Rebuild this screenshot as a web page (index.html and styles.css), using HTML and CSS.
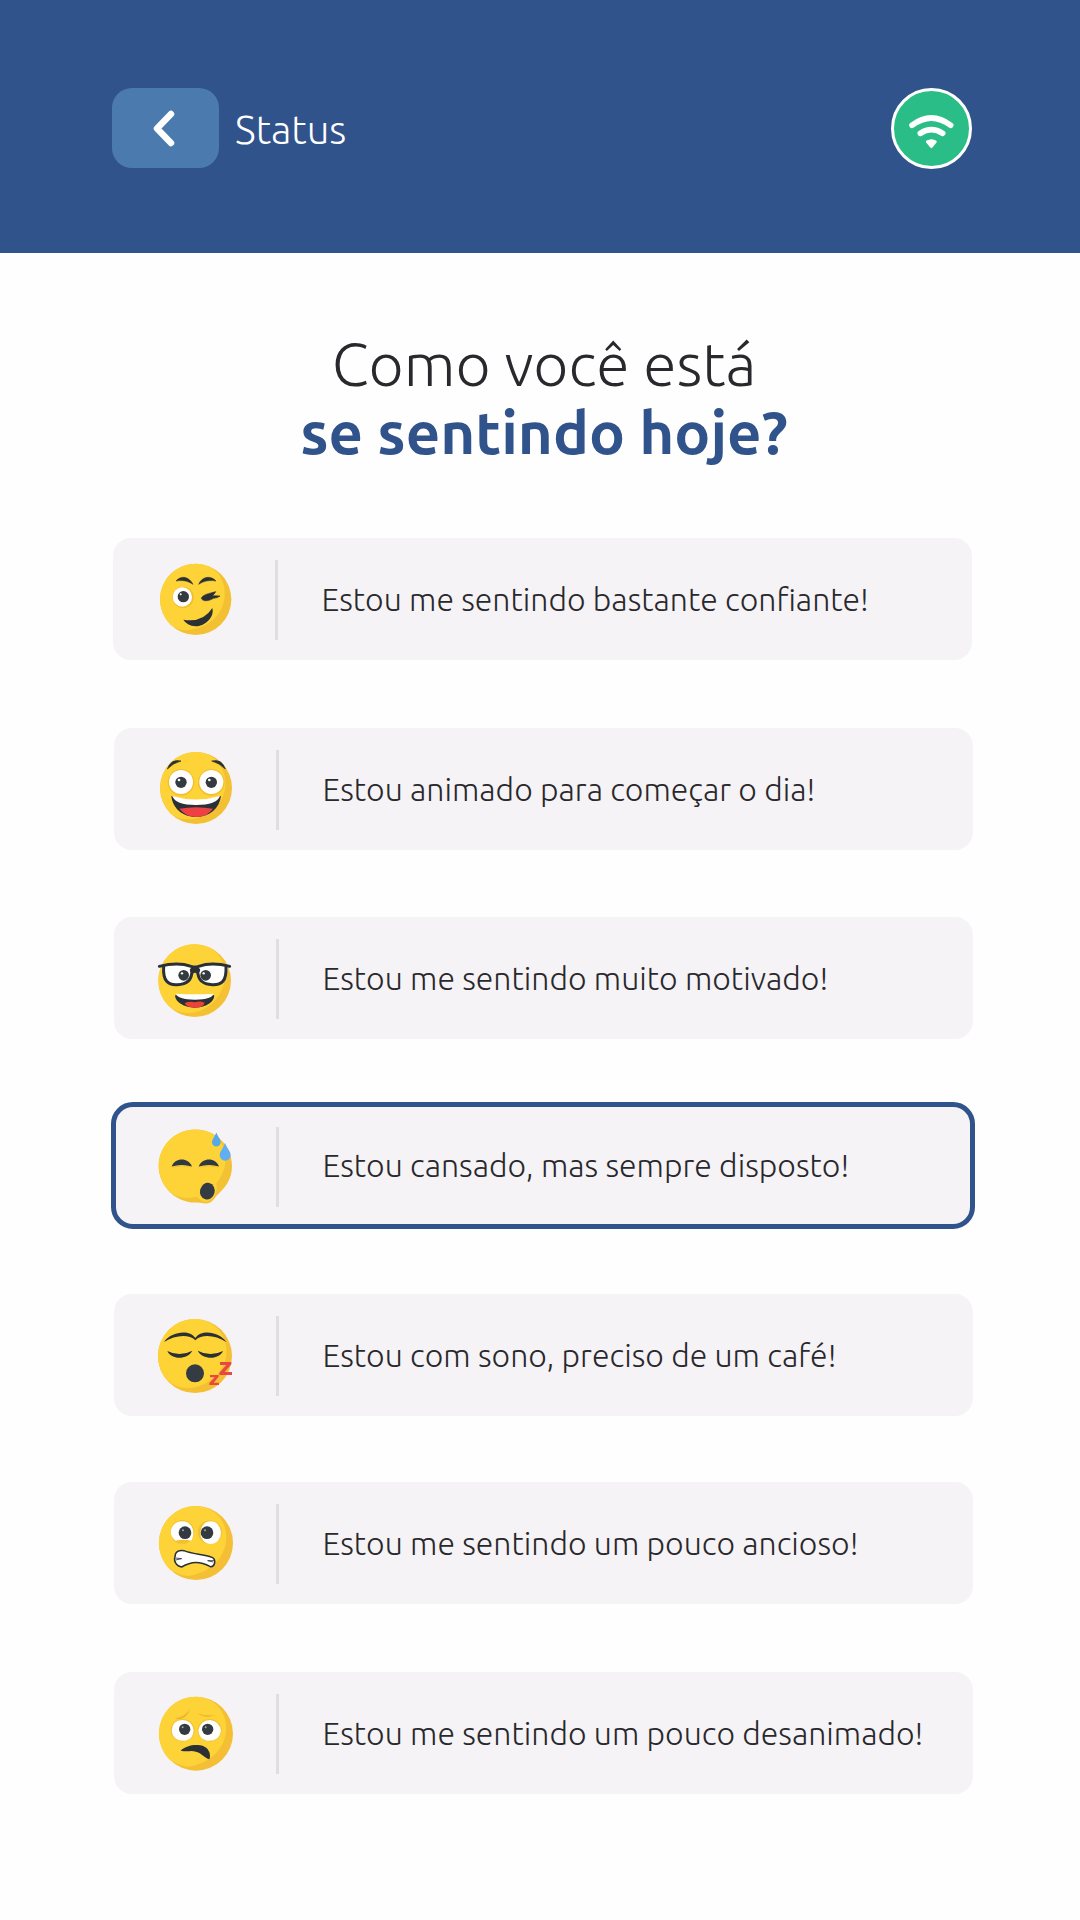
FILE: index.html
```html
<!DOCTYPE html>
<html lang="pt-BR">
<head>
    <meta charset="UTF-8">
    <meta name="viewport" content="width=device-width, initial-scale=1.0">
    <title>Status</title>
    <link rel="stylesheet" href="styles.css">
</head>
<body>
    <header class="header">
        <button class="back" aria-label="Voltar">
            <svg width="24" height="38" viewBox="0 0 24 38">
                <path d="M19 4 L5 18.500 L19 33" fill="none" stroke="#fff" stroke-width="6.500" stroke-linecap="round" stroke-linejoin="round"/>
            </svg>
        </button>
        <span class="header-title">Status</span>
        <div class="wifi">
            <svg width="75" height="75" viewBox="73 63 225 225">
                <g fill="none" stroke="#fff" stroke-width="17" stroke-linecap="round">
                    <path d="M127 166 Q185 122 243 166"/>
                    <path d="M152 190 Q185 168 219 190"/>
                </g>
                <path d="M169 217 Q167 211 176 210 Q185 206 195 210 Q203 212 201 217 L189 232 Q185 237 181 232 Z" fill="#fff"/>
            </svg>
        </div>
    </header>

    <main class="content">
        <h1 class="title">
            <span class="title-light">Como você está</span>
            <span class="title-bold">se sentindo hoje?</span>
        </h1>

        <ul class="moods">
            <li class="mood first">
                <svg class="emoji" viewBox="162 102 240 240">
                    <circle cx="287" cy="223" r="107" fill="#f3c034"/>
                    <path d="M287 116 C350 118 378 165 374 215 C369 270 325 309 265 315 Q235 318 212 299 A107 107 0 0 1 287 116" fill="#fdd337"/>
                    <path d="M228 168 C242 151 266 153 279 178 C262 167 246 165 228 168 M296 178 C306 153 334 151 348 168 C330 165 313 167 296 178" fill="#2b3035" stroke="#2b3035" stroke-width="1.500"/>
                    <circle cx="249" cy="217" r="32" fill="#f1bd2d"/>
                    <circle cx="247" cy="216" r="29" fill="#fff"/>
                    <circle cx="250" cy="215" r="17" fill="#343b40"/>
                    <circle cx="242" cy="208" r="3" fill="#fff"/>
                    <path d="M304 220 C307 209 329 205 347 200 Q343 208 337 212 L360 213 Q353 219 340 220 C326 229 308 230 304 220" fill="#2b3035" stroke="#2b3035" stroke-width="2"/>
                    <path d="M250 284 Q309 294 337 249 C345 280 309 305 287 304 Q260 301 250 284" fill="#2b3035"/>
                </svg>
                <span class="divider"></span>
                <span class="label">Estou me sentindo bastante confiante!</span>
            </li>
            <li class="mood">
                <svg class="emoji" viewBox="165 102 240 240">
                    <circle cx="288" cy="219" r="108" fill="#f3c034"/>
                    <path d="M288 111 C348 113 378 160 376 213 C371 270 326 306 277 312 Q238 316 213 296 A108 108 0 0 1 288 111" fill="#fdd337"/>
                    <path d="M202 162 Q213 131 243 138 Q221 143 202 162 M335 138 Q366 131 376 162 Q356 143 335 138" fill="#2b3035" stroke="#2b3035" stroke-width="2"/>
                    <circle cx="243" cy="202" r="40" fill="#f2bf2f"/>
                    <circle cx="334" cy="202" r="40" fill="#f2bf2f"/>
                    <circle cx="243" cy="201" r="36" fill="#fff"/>
                    <circle cx="334" cy="201" r="36" fill="#fff"/>
                    <circle cx="243" cy="202" r="17" fill="#343b40"/>
                    <circle cx="334" cy="202" r="17" fill="#343b40"/>
                    <circle cx="237" cy="195" r="4" fill="#fff"/>
                    <circle cx="328" cy="195" r="4" fill="#fff"/>
                    <path d="M214 243 Q288 268 363 243 C358 280 330 305 289 306 C247 306 218 280 214 243" fill="#2b3035"/>
                    <path d="M217 243 Q288 264 360 243 Q350 270 288 270 Q226 270 217 243" fill="#fff"/>
                    <path d="M238 281 Q288 272 339 281 Q321 306 289 306 Q257 305 238 281" fill="#ee4145"/>
                </svg>
                <span class="divider"></span>
                <span class="label">Estou animado para começar o dia!</span>
            </li>
            <li class="mood third">
                <svg class="emoji" viewBox="165 99 240 240">
                    <circle cx="284" cy="227" r="109" fill="#f4c134"/>
                    <path d="M284 118 C350 120 379 170 375 217 C370 275 327 319 270 324 Q232 326 204 301 A109 109 0 0 1 284 118" fill="#fdd337"/>
                    <path d="M187 181 Q234 170 275 186 C276 214 267 241 240 241 C203 243 190 231 191 188 M296 186 Q337 170 383 181 C383 226 372 243 334 241 C305 240 297 222 296 186" fill="#fff"/>
                    <circle cx="251" cy="211" r="16" fill="#343b40"/>
                    <circle cx="317" cy="211" r="16" fill="#343b40"/>
                    <circle cx="246" cy="205" r="3.500" fill="#fff"/>
                    <circle cx="311" cy="205" r="3.500" fill="#fff"/>
                    <g fill="none" stroke="#293038" stroke-width="9" stroke-linejoin="round" stroke-linecap="round">
                        <path d="M178 184 Q234 170 273 184 Q285 188 296 184 Q335 170 389 184"/>
                        <path d="M191 186 C188 228 205 241 232 239 C263 239 276 224 276 196"/>
                        <path d="M293 196 C293 224 306 238 337 239 C365 240 380 228 378 186"/>
                        <path d="M279 196 Q285 192 291 196" stroke-width="18"/>
                    </g>
                    <path d="M226 270 Q284 287 342 270 C346 287 320 308 285 308 C250 308 222 287 226 270" fill="#2b3035"/>
                    <path d="M228 266 Q284 270 340 266 Q337 283 285 284 Q233 283 228 266" fill="#fff"/>
                    <path d="M254 294 Q270 288 285 292 Q299 287 314 293 Q310 308 285 308 Q259 308 254 294" fill="#ee4137"/>
                </svg>
                <span class="divider"></span>
                <span class="label">Estou me sentindo muito motivado!</span>
            </li>
            <li class="mood selected">
                <svg class="emoji" viewBox="165 106.500 240 240">
                    <path d="M286 117 C350 117 396 168 396 226 C396 267 376 292 348 317 Q333 343 311 338 Q300 337 292 336 C225 339 176 283 176 227 C176 166 225 117 286 117" fill="#f3c134"/>
                    <path d="M286 117 C348 118 381 164 377 214 Q372 252 348 280 C358 300 338 337 313 334 Q297 328 290 319 Q240 331 208 303 A109 109 0 0 1 286 117" fill="#fdd338"/>
                    <path d="M215 228 C224 201 265 199 276 228 Q245 219 215 228 M296 228 C306 201 347 199 357 228 Q327 219 296 228" fill="#303840"/>
                    <path d="M218 230 Q246 222 273 230 M299 230 Q327 222 354 230" fill="none" stroke="#eab72f" stroke-width="2"/>
                    <ellipse cx="322" cy="302" rx="22" ry="25" transform="rotate(14 322 302)" fill="#343b42"/>
                    <path d="M349 126 C354 139 362 147 362 155 A13 13 0 0 1 336 155 C336 147 344 139 349 126" fill="#55a9e9"/>
                    <path d="M375 157 C380 174 392 182 392 194 A16.500 16.500 0 0 1 359 194 C359 182 371 174 375 157" fill="#61aff0"/>
                </svg>
                <span class="divider"></span>
                <span class="label">Estou cansado, mas sempre disposto!</span>
            </li>
            <li class="mood after-selected">
                <svg class="emoji" viewBox="165 90 240 240">
                    <circle cx="285" cy="213" r="111" fill="#f4bf32"/>
                    <path d="M285 102 C350 104 383 157 379 209 C374 262 325 302 271 309 Q225 311 199 283 A111 111 0 0 1 285 102" fill="#fdd335"/>
                    <path d="M192 171 C213 140 268 132 286 159 C304 132 358 140 379 171 C347 151 306 146 286 166 C266 146 224 151 192 171" fill="#2b3035"/>
                    <path d="M202 198 Q239 217 277 197 C265 222 216 228 202 198 M293 197 Q331 217 369 198 C355 228 305 222 293 197" fill="#2b3035"/>
                    <circle cx="285" cy="265" r="27" fill="#343b42"/>
                    <path d="M360 231 H394 V238 L374 261 H396 V270 H358 V263 L379 240 H360 Z M330 270 H356 V275 L341 293 H357 V300 H328 V294 L344 277 H330 Z" fill="#e94842"/>
                </svg>
                <span class="divider"></span>
                <span class="label">Estou com sono, preciso de um café!</span>
            </li>
            <li class="mood">
                <svg class="emoji" viewBox="165 99 240 240">
                    <circle cx="288" cy="219" r="111" fill="#f4bf34"/>
                    <path d="M288 108 C351 110 384 162 378 213 C372 273 320 311 262 318 Q229 314 205 293 A111 111 0 0 1 288 108" fill="#fdd337"/>
                    <circle cx="247" cy="186" r="36" fill="#f3c032"/>
                    <circle cx="330" cy="187" r="36" fill="#f3c032"/>
                    <path d="M227 212 C200 195 212 154 247 154 C275 154 289 184 274 212 Q251 207 227 212" fill="#fff"/>
                    <ellipse cx="332" cy="188" rx="31" ry="34" fill="#fff"/>
                    <circle cx="255" cy="188" r="19" fill="#343b40"/>
                    <circle cx="321" cy="188" r="19" fill="#343b40"/>
                    <circle cx="249" cy="181" r="3" fill="#a2a4a5"/>
                    <circle cx="315" cy="181" r="3" fill="#a2a4a5"/>
                    <path d="M225 261 C225 245 235 240 252 242 C279 254 310 251 336 262 Q346 267 344 279 Q340 292 331 290 C298 273 275 274 245 291 C230 289 220 274 225 261" fill="#fff" stroke="#2b3035" stroke-width="4.500" stroke-linejoin="round"/>
                    <path d="M227 264 L245 266 L227 270 M342 272 L323 272 L340 276" fill="none" stroke="#2b3035" stroke-width="2.500"/>
                </svg>
                <span class="divider"></span>
                <span class="label">Estou me sentindo um pouco ancioso!</span>
            </li>
            <li class="mood">
                <svg class="emoji" viewBox="165 99 240 240">
                    <circle cx="288" cy="221" r="111" fill="#f4bf34"/>
                    <path d="M288 110 C351 112 383 164 378 215 C372 274 320 313 262 320 Q229 316 205 295 A111 111 0 0 1 288 110" fill="#fdd337"/>
                    <path d="M229 174 Q256 170 270 146 Q262 177 229 178 M292 159 Q315 170 348 165 Q316 178 292 159" fill="#e8b32e"/>
                    <ellipse cx="248" cy="211" rx="36" ry="34" fill="#f3c032"/>
                    <ellipse cx="329" cy="211" rx="36" ry="34" fill="#f3c032"/>
                    <path d="M215 213 Q216 181 247 180 Q277 181 281 211 Q280 238 257 242 Q219 246 215 213 M295 211 Q301 181 330 180 Q360 184 363 213 Q358 246 320 242 Q296 236 295 211" fill="#fff"/>
                    <circle cx="254" cy="208" r="17" fill="#343b40"/>
                    <circle cx="323" cy="208" r="17" fill="#343b40"/>
                    <circle cx="248" cy="202" r="3" fill="#a2a4a5"/>
                    <circle cx="317" cy="202" r="3" fill="#a2a4a5"/>
                    <path d="M242 272 C264 250 311 250 323 268 Q334 283 328 298 C309 293 304 274 275 273 Q256 275 242 272" fill="#2b3035"/>
                </svg>
                <span class="divider"></span>
                <span class="label">Estou me sentindo um pouco desanimado!</span>
            </li>
        </ul>
    </main>
</body>
</html>
```
FILE: styles.css
```css
* {
    box-sizing: border-box;
}
body {
    margin: 0;
    min-height: 100vh;
    background-color: #fefefe;
    color: #29282c;
    font-family: Ubuntu, "Noto Sans", sans-serif;
    font-weight: 300;
}
.header {
    display: flex;
    align-items: flex-start;
    height: 253px;
    padding: 88px 108px 0 112px;
    background-color: #31538b;
    color: white;
}
.back {
    display: flex;
    justify-content: center;
    align-items: center;
    width: 107px;
    height: 80px;
    padding: 2px 4px 0 0;
    border: 0;
    border-radius: 20px;
    background-color: #4b7bae;
}
.header-title {
    margin-left: 16px;
    font-size: 40px;
    line-height: 84px;
}
.wifi {
    width: 81px;
    height: 81px;
    margin-left: auto;
    border: 3px solid white;
    border-radius: 50%;
    background-color: #2bbd88;
}
.wifi svg {
    display: block;
}
.content {
    padding: 77px 105px 0 111px;
}
.title {
    margin: 0;
    padding-left: 2px;
    font-size: 60.6px;
    line-height: 68px;
    font-weight: 300;
    text-align: center;
}
.title span {
    display: block;
}
.title-bold {
    color: #31538b;
    font-size: 60px;
    font-weight: 600;
}
.moods {
    list-style: none;
    margin: 72px 0 0;
    padding: 0;
}
.mood {
    display: flex;
    align-items: center;
    width: 859px;
    height: 122px;
    margin: 0 0 68px 3px;
    padding-left: 41px;
    border-radius: 18px;
    background-color: #f5f3f6;
}
.mood.first {
    margin-left: 2px;
}
.mood.third {
    margin-top: -1px;
}
.mood.selected {
    width: 864px;
    height: 127px;
    margin: -5px 0 65px 0;
    padding-left: 39px;
    border: 5px solid #31538b;
    border-radius: 22px;
}
.mood.selected .divider {
    margin-top: 3px;
}
.mood.selected .label {
    margin-bottom: 1px;
}
.mood.after-selected {
    margin-bottom: 66px;
}
.emoji {
    flex: none;
    width: 80px;
    height: 80px;
    overflow: visible;
}
.divider {
    flex: none;
    width: 3px;
    height: 80px;
    margin: 1px 43.5px 0 41px;
    background-color: #dfdee1;
}
.label {
    font-size: 32px;
    line-height: 44px;
    white-space: nowrap;
}
```
